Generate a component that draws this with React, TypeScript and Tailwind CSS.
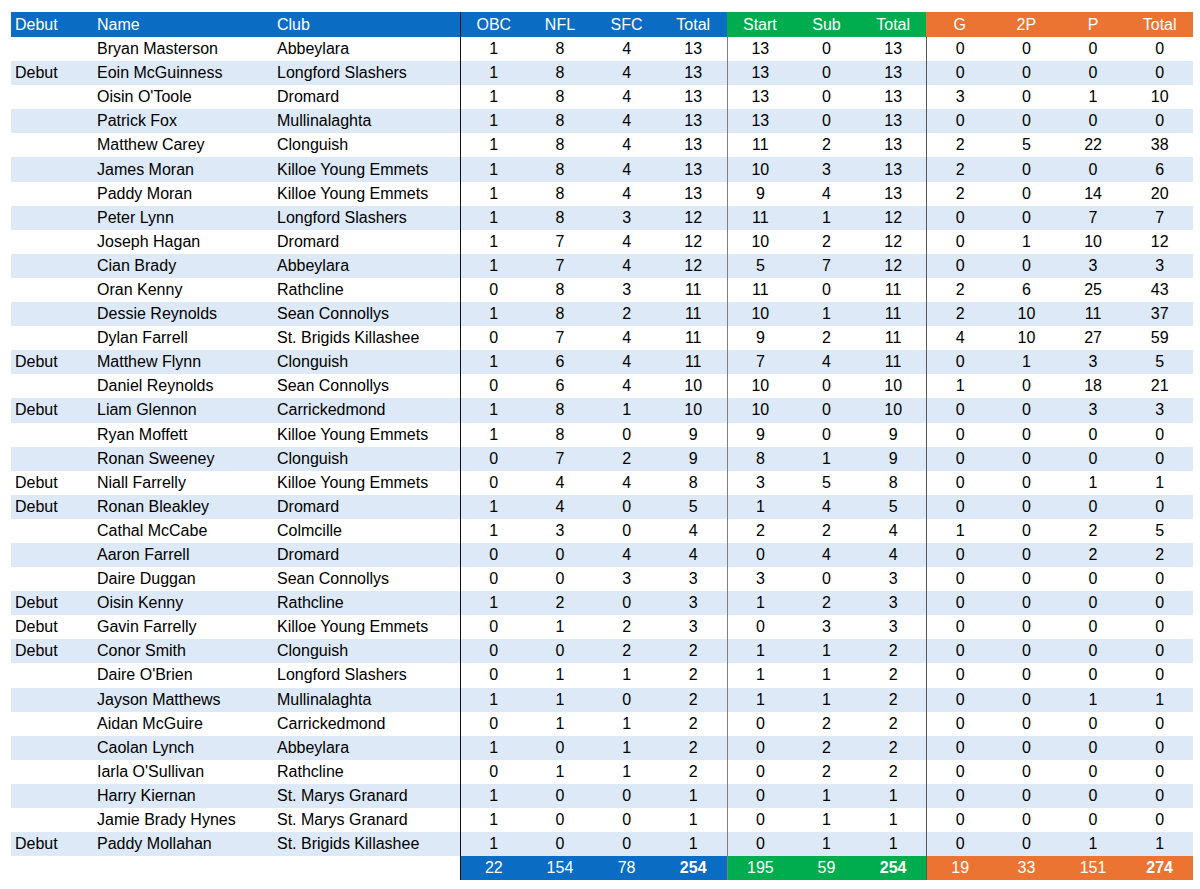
import React from 'react';

// Squad appearance / scoring table, laid out like the spreadsheet it came from
type Player = [debut: boolean, name: string, club: string, stats: number[]];

const players: Player[] = [
  [false, 'Bryan Masterson', 'Abbeylara', [1, 8, 4, 13, 13, 0, 13, 0, 0, 0, 0]],
  [true, 'Eoin McGuinness', 'Longford Slashers', [1, 8, 4, 13, 13, 0, 13, 0, 0, 0, 0]],
  [false, "Oisin O'Toole", 'Dromard', [1, 8, 4, 13, 13, 0, 13, 3, 0, 1, 10]],
  [false, 'Patrick Fox', 'Mullinalaghta', [1, 8, 4, 13, 13, 0, 13, 0, 0, 0, 0]],
  [false, 'Matthew Carey', 'Clonguish', [1, 8, 4, 13, 11, 2, 13, 2, 5, 22, 38]],
  [false, 'James Moran', 'Killoe Young Emmets', [1, 8, 4, 13, 10, 3, 13, 2, 0, 0, 6]],
  [false, 'Paddy Moran', 'Killoe Young Emmets', [1, 8, 4, 13, 9, 4, 13, 2, 0, 14, 20]],
  [false, 'Peter Lynn', 'Longford Slashers', [1, 8, 3, 12, 11, 1, 12, 0, 0, 7, 7]],
  [false, 'Joseph Hagan', 'Dromard', [1, 7, 4, 12, 10, 2, 12, 0, 1, 10, 12]],
  [false, 'Cian Brady', 'Abbeylara', [1, 7, 4, 12, 5, 7, 12, 0, 0, 3, 3]],
  [false, 'Oran Kenny', 'Rathcline', [0, 8, 3, 11, 11, 0, 11, 2, 6, 25, 43]],
  [false, 'Dessie Reynolds', 'Sean Connollys', [1, 8, 2, 11, 10, 1, 11, 2, 10, 11, 37]],
  [false, 'Dylan Farrell', 'St. Brigids Killashee', [0, 7, 4, 11, 9, 2, 11, 4, 10, 27, 59]],
  [true, 'Matthew Flynn', 'Clonguish', [1, 6, 4, 11, 7, 4, 11, 0, 1, 3, 5]],
  [false, 'Daniel Reynolds', 'Sean Connollys', [0, 6, 4, 10, 10, 0, 10, 1, 0, 18, 21]],
  [true, 'Liam Glennon', 'Carrickedmond', [1, 8, 1, 10, 10, 0, 10, 0, 0, 3, 3]],
  [false, 'Ryan Moffett', 'Killoe Young Emmets', [1, 8, 0, 9, 9, 0, 9, 0, 0, 0, 0]],
  [false, 'Ronan Sweeney', 'Clonguish', [0, 7, 2, 9, 8, 1, 9, 0, 0, 0, 0]],
  [true, 'Niall Farrelly', 'Killoe Young Emmets', [0, 4, 4, 8, 3, 5, 8, 0, 0, 1, 1]],
  [true, 'Ronan Bleakley', 'Dromard', [1, 4, 0, 5, 1, 4, 5, 0, 0, 0, 0]],
  [false, 'Cathal McCabe', 'Colmcille', [1, 3, 0, 4, 2, 2, 4, 1, 0, 2, 5]],
  [false, 'Aaron Farrell', 'Dromard', [0, 0, 4, 4, 0, 4, 4, 0, 0, 2, 2]],
  [false, 'Daire Duggan', 'Sean Connollys', [0, 0, 3, 3, 3, 0, 3, 0, 0, 0, 0]],
  [true, 'Oisin Kenny', 'Rathcline', [1, 2, 0, 3, 1, 2, 3, 0, 0, 0, 0]],
  [true, 'Gavin Farrelly', 'Killoe Young Emmets', [0, 1, 2, 3, 0, 3, 3, 0, 0, 0, 0]],
  [true, 'Conor Smith', 'Clonguish', [0, 0, 2, 2, 1, 1, 2, 0, 0, 0, 0]],
  [false, "Daire O'Brien", 'Longford Slashers', [0, 1, 1, 2, 1, 1, 2, 0, 0, 0, 0]],
  [false, 'Jayson Matthews', 'Mullinalaghta', [1, 1, 0, 2, 1, 1, 2, 0, 0, 1, 1]],
  [false, 'Aidan McGuire', 'Carrickedmond', [0, 1, 1, 2, 0, 2, 2, 0, 0, 0, 0]],
  [false, 'Caolan Lynch', 'Abbeylara', [1, 0, 1, 2, 0, 2, 2, 0, 0, 0, 0]],
  [false, "Iarla O'Sullivan", 'Rathcline', [0, 1, 1, 2, 0, 2, 2, 0, 0, 0, 0]],
  [false, 'Harry Kiernan', 'St. Marys Granard', [1, 0, 0, 1, 0, 1, 1, 0, 0, 0, 0]],
  [false, 'Jamie Brady Hynes', 'St. Marys Granard', [1, 0, 0, 1, 0, 1, 1, 0, 0, 0, 0]],
  [true, 'Paddy Mollahan', 'St. Brigids Killashee', [1, 0, 0, 1, 0, 1, 1, 0, 0, 1, 1]],
];

const totals = [22, 154, 78, 254, 195, 59, 254, 19, 33, 151, 274];

const statHeads = ['OBC', 'NFL', 'SFC', 'Total', 'Start', 'Sub', 'Total', 'G', '2P', 'P', 'Total'];

const grid = 'grid grid-cols-[82px_180px_187px_repeat(11,minmax(0,1fr))]';

// group colour for each stat column (header + footer)
const groupBg = (i: number) => (i < 4 ? 'bg-[#0a6cc2]' : i < 7 ? 'bg-[#00ad4e]' : 'bg-[#ec7433]');

// vertical dividers at the start of each group
const divider = (i: number, inHeader: boolean) => {
  if (i === 0) return 'border-l border-l-[#111]';
  if (inHeader) return '';
  if (i === 4) return 'border-l border-l-[#7f7f7f]';
  if (i === 7) return 'border-l border-l-[#555]';
  return '';
};

export default function App() {
  return (
    <div className="min-h-screen w-[1200px] bg-white pl-[11px] pt-[12px] font-['Liberation_Sans',Arial,sans-serif] text-[16px] text-black">
      <div className="w-[1182px]">
        {/* header */}
        <div className={`${grid} h-[25px] items-stretch text-white`}>
          <div className="flex items-center bg-[#0a6cc2] pl-[4px]">Debut</div>
          <div className="flex items-center bg-[#0a6cc2] pl-[4px]">Name</div>
          <div className="flex items-center bg-[#0a6cc2] pl-[4px]">Club</div>
          {statHeads.map((h, i) => (
            <div key={i} className={`flex items-center justify-center ${groupBg(i)} ${divider(i, true)}`}>
              {h}
            </div>
          ))}
        </div>

        {/* rows */}
        {players.map(([debut, name, club, stats], r) => (
          <div key={name} className={`${grid} h-[24.1px] ${r % 2 === 1 ? 'bg-[#dde9f6]' : 'bg-white'}`}>
            <div className="flex items-center pl-[4px]">{debut ? 'Debut' : ''}</div>
            <div className="flex items-center whitespace-nowrap pl-[4px]">{name}</div>
            <div className="flex items-center whitespace-nowrap pl-[4px]">{club}</div>
            {stats.map((v, i) => (
              <div key={i} className={`flex items-center justify-center ${divider(i, false)}`}>
                {v}
              </div>
            ))}
          </div>
        ))}

        {/* totals */}
        <div className={`${grid} h-[24px] text-white`}>
          <div />
          <div />
          <div />
          {totals.map((v, i) => (
            <div
              key={i}
              className={`flex items-center justify-center ${groupBg(i)} ${divider(i, false)} ${
                i === 3 || i === 6 || i === 10 ? 'font-bold' : ''
              }`}
            >
              {v}
            </div>
          ))}
        </div>
      </div>
    </div>
  );
}
